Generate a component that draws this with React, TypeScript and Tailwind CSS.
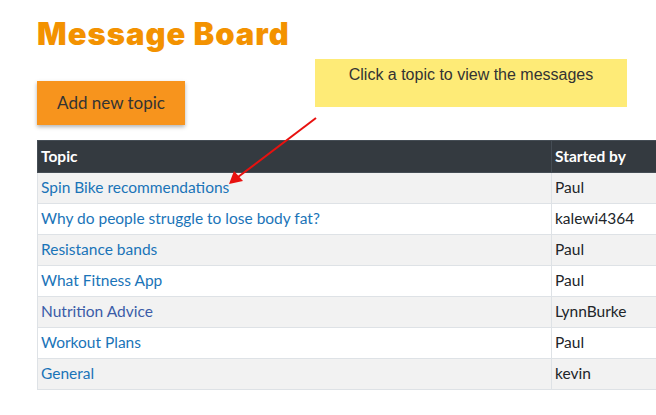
import React from 'react';

const topics = [
  { title: 'Spin Bike recommendations', by: 'Paul' },
  { title: 'Why do people struggle to lose body fat?', by: 'kalewi4364' },
  { title: 'Resistance bands', by: 'Paul' },
  { title: 'What Fitness App', by: 'Paul' },
  { title: 'Nutrition Advice', by: 'LynnBurke', visited: true },
  { title: 'Workout Plans', by: 'Paul' },
  { title: 'General', by: 'kevin' },
];

export default function App() {
  return (
    <div className="relative w-[656px] h-[415px] overflow-hidden bg-white font-['Lato',sans-serif]">
      <div className="pl-[37px] pt-[14px]">
        <h1 className="h-[45px] text-[31px] leading-[40px] font-black text-[#f39200] tracking-[1px] font-['Inter',sans-serif]">
          Message Board
        </h1>

        <div className="flex items-start">
          <button className="mt-[22px] w-[148px] h-[44px] bg-[#f7941d] text-[#333] text-[17px] shadow-[0_2px_4px_rgba(0,0,0,0.3)]">
            Add new topic
          </button>
          <div className="ml-[130px] w-[312px] h-[48px] bg-[#feeb77] pt-[4px] text-center text-[16px] text-[#333] font-['Liberation_Sans',sans-serif]">
            Click a topic to view the messages
          </div>
        </div>

        <table className="mt-[15px] w-[700px] border-collapse text-[15.5px]">
          <thead>
            <tr className="bg-[#343a40] text-white h-[32px] text-[15.5px]">
              <th className="w-[514px] text-left font-bold px-[3px] border border-[#454d55]">Topic</th>
              <th className="text-left font-bold px-[3px] border border-[#454d55]">Started by</th>
            </tr>
          </thead>
          <tbody>
            {topics.map((t, i) => (
              <tr key={t.title} className={`h-[31px] ${i % 2 === 0 ? 'bg-[#f2f2f2]' : 'bg-white'}`}>
                <td className="px-[3px] border border-[#dee2e6]">
                  <a className={t.visited ? 'text-[#3b5ca8]' : 'text-[#1a74b8]'}>{t.title}</a>
                </td>
                <td className="px-[3px] border border-[#dee2e6] text-[#212529]">{t.by}</td>
              </tr>
            ))}
          </tbody>
        </table>
      </div>

      <svg className="absolute left-0 top-0 pointer-events-none" width="656" height="415">
        <line x1="316" y1="118" x2="238" y2="177" stroke="#e8110f" strokeWidth="2" />
        <polygon points="229,184 234,171 243,181" fill="#e8110f" />
      </svg>
    </div>
  );
}
